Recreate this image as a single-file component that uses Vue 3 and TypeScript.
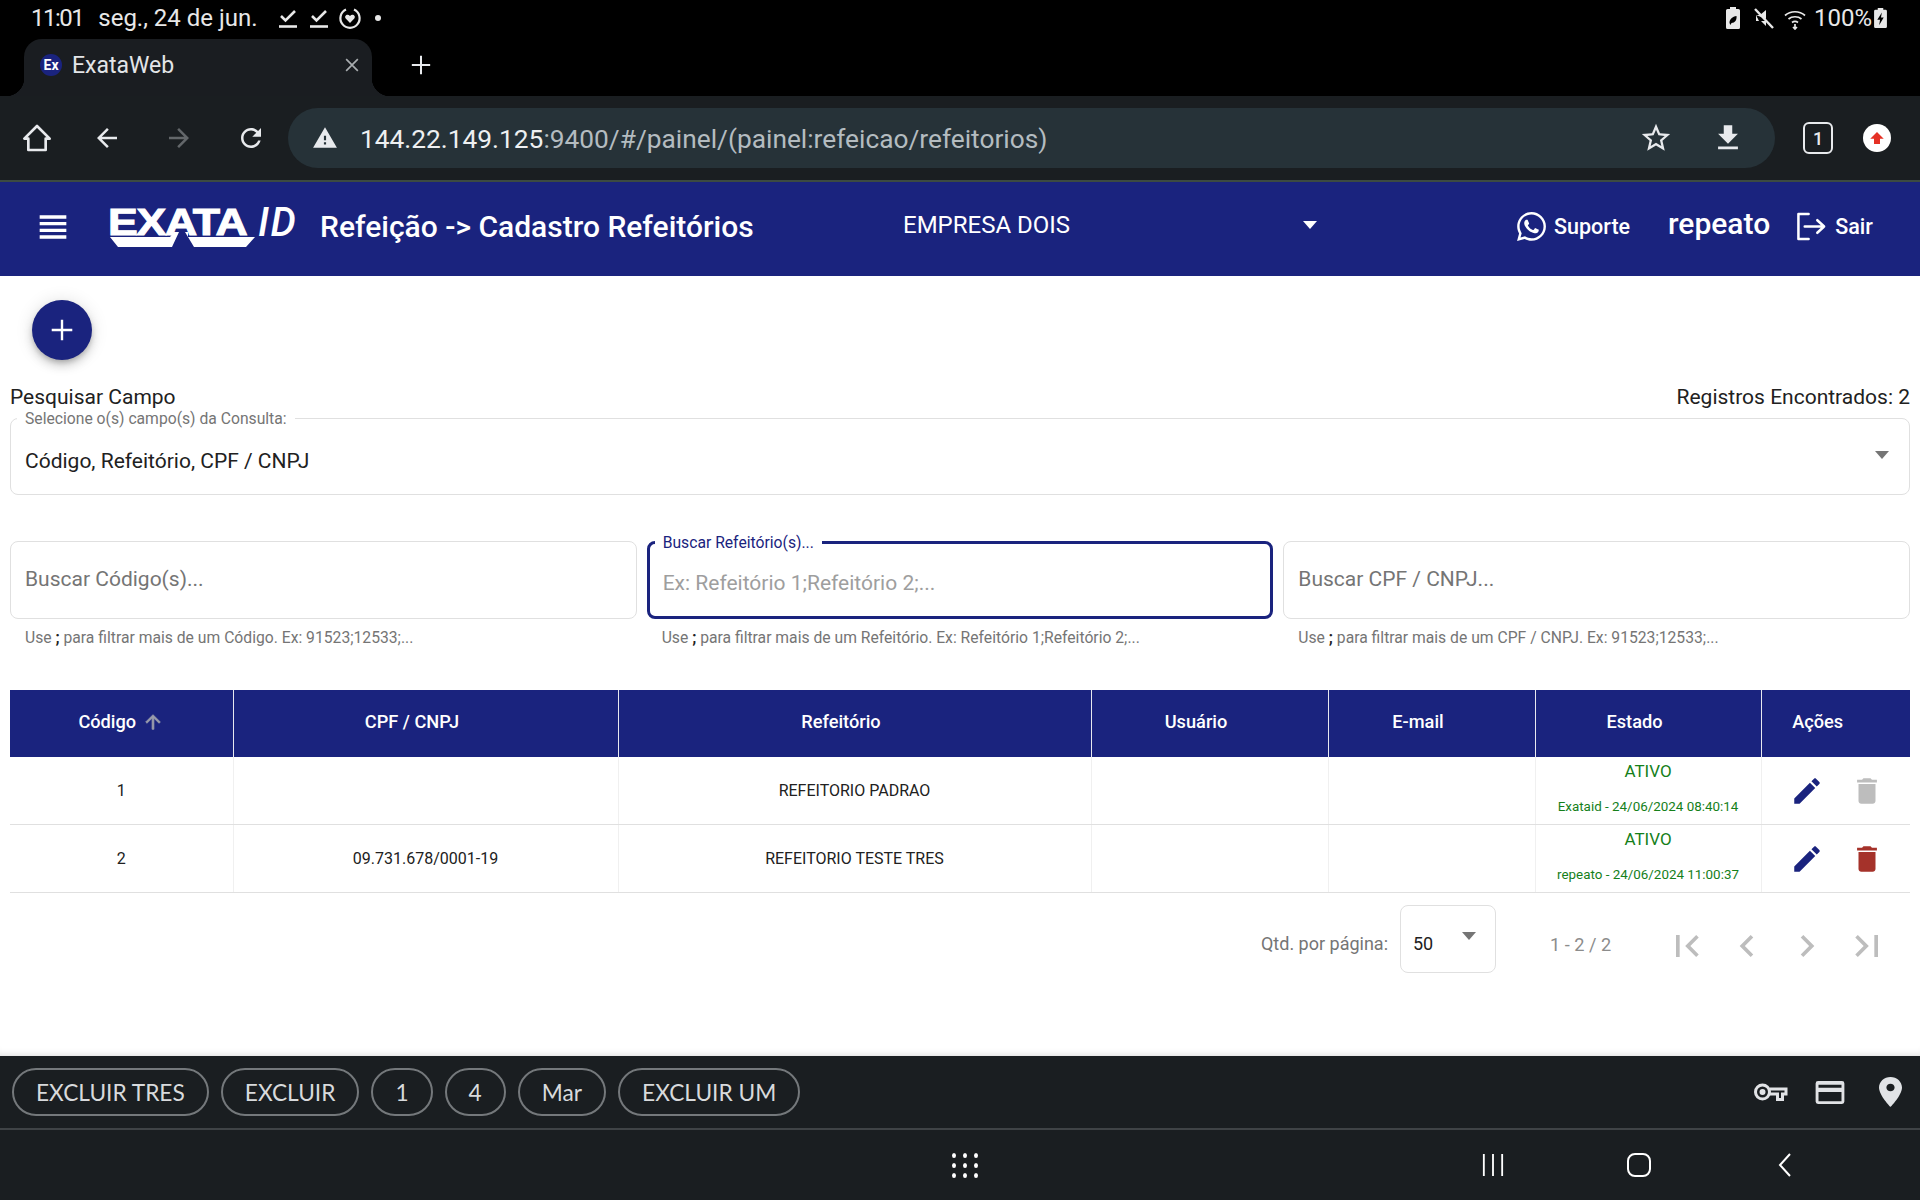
<script setup lang="ts">
interface IRow {
  id: number,
  doc: string,
  name: string,
  audit: string,
  canDelete: boolean
}

interface IFilter {
  label: string,
  placeholder: string,
  hint: string,
  focused: boolean
}

const columns = ['CPF / CNPJ', 'Refeitório', 'Usuário', 'E-mail', 'Estado', 'Ações']

const rows: IRow[] = [
  {id: 1, doc: '', name: 'REFEITORIO PADRAO', audit: 'Exataid - 24/06/2024 08:40:14', canDelete: false},
  {id: 2, doc: '09.731.678/0001-19', name: 'REFEITORIO TESTE TRES', audit: 'repeato - 24/06/2024 11:00:37', canDelete: true}
]

const filters: IFilter[] = [
  {label: '', placeholder: 'Buscar Código(s)...', hint: 'para filtrar mais de um Código. Ex: 91523;12533;...', focused: false},
  {label: 'Buscar Refeitório(s)...', placeholder: 'Ex: Refeitório 1;Refeitório 2;...', hint: 'para filtrar mais de um Refeitório. Ex: Refeitório 1;Refeitório 2;...', focused: true},
  {label: '', placeholder: 'Buscar CPF / CNPJ...', hint: 'para filtrar mais de um CPF / CNPJ. Ex: 91523;12533;...', focused: false}
]

const chips = ['EXCLUIR TRES', 'EXCLUIR', '1', '4', 'Mar', 'EXCLUIR UM']

const pager = [
  'M18.41 16.59L13.82 12l4.59-4.59L17 6l-6 6 6 6zM6 6h2v12H6z',
  'M15.41 7.41L14 6l-6 6 6 6 1.41-1.41L10.83 12z',
  'M10 6L8.59 7.41 13.17 12l-4.58 4.59L10 18l6-6z',
  'M5.59 7.41L10.18 12l-4.59 4.59L7 18l6-6-6-6zM16 6h2v12h-2z'
]
</script>

<template>
  <div class="screen">
    <div class="status-bar">
      <div class="status-left">
        <span class="clock">11:01</span>
        <span>seg., 24 de jun.</span>
        <svg class="st-icon" viewBox="0 0 24 24" fill="none" stroke="#e8e8e8" stroke-width="2.6"><path d="M5 10l4.5 4.5L19 5"/><path d="M3 20.5h18"/></svg>
        <svg class="st-icon" viewBox="0 0 24 24" fill="none" stroke="#e8e8e8" stroke-width="2.6"><path d="M5 10l4.5 4.5L19 5"/><path d="M3 20.5h18"/></svg>
        <svg class="st-icon" viewBox="0 0 24 24" fill="none" stroke="#e8e8e8" stroke-width="2.2"><path d="M8 3.5a9.6 9.6 0 1 0 8 0"/><path fill="#e8e8e8" stroke="none" d="M12 17l-4.3-4.6c-2-2.4 1.9-5.2 4.3-2.400 2.400-2.800 6.300 0 4.300 2.400z"/></svg>
        <span class="st-dot"></span>
      </div>
      <div class="status-right">
        <svg class="st-icon" viewBox="0 0 24 24"><path fill="#e8e8e8" d="M9 1h6v2h2.500a1.500 1.500 0 0 1 1.500 1.500v17a1.500 1.500 0 0 1-1.500 1.500h-11A1.500 1.500 0 0 1 5 21.500v-17A1.500 1.500 0 0 1 6.500 3H9z"/><path fill="#000" d="M8.500 17c0-4 3-6.500 7-7 .5 4-1.500 7-5 7l-1 2z"/></svg>
        <svg class="st-icon" viewBox="0 0 24 24"><path fill="#e8e8e8" d="M4 9h4l6-5v9zM4 9v6h3zM9 15l5 5v-5z"/><path stroke="#e8e8e8" stroke-width="2.400" d="M3 3l18 19"/></svg>
        <svg class="st-icon" viewBox="0 0 24 24" fill="none" stroke="#e8e8e8" stroke-width="1.700"><path d="M2 9.500c5.500-5 14.500-5 20 0"/><path d="M5.500 13c3.500-3 9.500-3 13 0"/><path d="M9 16.500c1.700-1.300 4.300-1.300 6 0"/><path d="M12 18v5M10 21l2 2 2-2"/></svg>
        <span class="battery-text">100%</span>
        <svg class="st-batt" viewBox="0 0 14 24"><path fill="#e8e8e8" d="M4 1h6v2h2.500A1.500 1.500 0 0 1 14 4.500v17a1.500 1.500 0 0 1-1.500 1.500h-11A1.500 1.500 0 0 1 0 21.500v-17A1.500 1.500 0 0 1 1.500 3H4z"/><path fill="#000" d="M8.500 6L3.500 14h3l-1 6 5-8.500h-3z"/></svg>
      </div>
    </div>

    <div class="tab-strip">
      <div class="tab">
        <span class="favicon">Ex</span>
        <span class="tab-title">ExataWeb</span>
        <svg class="tab-close" viewBox="0 0 24 24" fill="none" stroke="#a9adb0" stroke-width="2"><path d="M5 5l14 14M19 5L5 19"/></svg>
      </div>
      <svg class="tab-new" viewBox="0 0 24 24" fill="none" stroke="#e8eaed" stroke-width="2.200"><path d="M12 2v20M2 12h20"/></svg>
    </div>

    <div class="toolbar">
      <svg class="tb-icon home" viewBox="0 0 24 24" fill="none" stroke="#e8eaed" stroke-width="2" stroke-linejoin="round"><path d="M12 3L2.500 12.500H5.500V21h13v-8.500h3z"/></svg>
      <svg class="tb-icon back" viewBox="0 0 24 24"><path fill="#e8eaed" d="M20 11H7.830l5.590-5.590L12 4l-8 8 8 8 1.410-1.410L7.830 13H20v-2z"/></svg>
      <svg class="tb-icon forward" viewBox="0 0 24 24"><path fill="#63676a" d="M12 4l-1.410 1.410L16.170 11H4v2h12.170l-5.580 5.590L12 20l8-8z"/></svg>
      <svg class="tb-icon reload" viewBox="0 0 24 24"><path fill="#e8eaed" d="M17.650 6.350C16.200 4.900 14.210 4 12 4c-4.420 0-7.990 3.580-7.990 8s3.570 8 7.990 8c3.730 0 6.840-2.550 7.730-6h-2.080c-.82 2.330-3.040 4-5.650 4-3.310 0-6-2.690-6-6s2.690-6 6-6c1.660 0 3.140.69 4.220 1.780L13 11h7V4l-2.350 2.350z"/></svg>
      <div class="address">
        <svg class="warn" viewBox="0 0 24 24"><path fill="#e8eaed" d="M1 21h22L12 2 1 21zm12-3h-2v-2h2v2zm0-4h-2v-4h2v4z"/></svg>
        <span class="url"><b>144.22.149.125</b>:9400/#/painel/(painel:refeicao/refeitorios)</span>
        <svg class="star" viewBox="0 0 24 24"><path fill="#e8eaed" d="M22 9.240l-7.190-.62L12 2 9.190 8.630 2 9.240l5.460 4.730L5.820 21 12 17.270 18.180 21l-1.630-7.030L22 9.240zM12 15.400l-3.760 2.270 1-4.280-3.320-2.880 4.380-.38L12 6.100l1.710 4.040 4.380.38-3.320 2.880 1 4.280L12 15.400z"/></svg>
        <svg class="download" viewBox="0 0 24 24"><path fill="#e8eaed" d="M19 9h-4V3H9v6H5l7 7 7-7zM5 18v2h14v-2H5z"/></svg>
      </div>
      <span class="tab-count">1</span>
      <span class="update"><svg viewBox="0 0 24 24"><path fill="#e53125" d="M12 4L3 13h5v7h8v-7h5z"/></svg></span>
    </div>

    <header class="app-header">
      <svg class="menu" viewBox="0 0 24 24"><path fill="#fff" d="M4 15h16v-2H4v2zm0 4h16v-2H4v2zm0-8h16V9H4v2zm0-6v2h16V5H4z"/></svg>
      <div class="logo">
        <div class="logo-mark">
          <span class="logo-exata">EXATA</span>
          <svg class="logo-swoosh" viewBox="0 0 145 10"><path fill="#fff" d="M0 0h60l4-5h5l-7 15H8zM78 0h67l-9 10H84l-9-15h3z"/></svg>
        </div>
        <span class="logo-id">ID</span>
      </div>
      <span class="page-title">Refeição -&gt; Cadastro Refeitórios</span>
      <div class="company">
        <span>EMPRESA DOIS</span>
        <i class="caret caret-white"></i>
      </div>
      <div class="support">
        <svg viewBox="0 0 448 512"><path fill="#fff" d="M380.900 97.100C339 55.100 283.200 32 223.900 32c-122.400 0-222 99.600-222 222 0 39.100 10.200 77.300 29.600 111L0 480l117.700-30.900c32.400 17.700 68.900 27 106.100 27h.1c122.300 0 224.100-99.600 224.100-222 0-59.300-25.200-115-67.100-157zm-157 341.600c-33.200 0-65.700-8.900-94-25.700l-6.700-4-69.800 18.300L72 359.200l-4.400-7c-18.500-29.400-28.200-63.300-28.200-98.200 0-101.700 82.800-184.500 184.600-184.500 49.300 0 95.600 19.200 130.400 54.100 34.800 34.900 56.200 81.200 56.100 130.500 0 101.800-84.900 184.600-186.600 184.600zm101.200-138.200c-5.500-2.800-32.800-16.200-37.900-18-5.100-1.900-8.800-2.800-12.500 2.800-3.700 5.600-14.300 18-17.600 21.800-3.200 3.700-6.500 4.200-12 1.400-32.600-16.300-54-29.100-75.500-66-5.700-9.800 5.700-9.100 16.300-30.300 1.800-3.700.9-6.900-.5-9.700-1.400-2.800-12.500-30.100-17.100-41.200-4.500-10.800-9.100-9.300-12.500-9.500-3.200-.2-6.900-.2-10.600-.2-3.700 0-9.700 1.400-14.800 6.900-5.100 5.600-19.400 19-19.400 46.300 0 27.300 19.900 53.700 22.600 57.400 2.800 3.700 39.100 59.700 94.800 83.800 35.200 15.200 49 16.500 66.600 13.900 10.700-1.600 32.800-13.400 37.400-26.400 4.600-13 4.600-24.100 3.200-26.400-1.300-2.500-5-3.900-10.500-6.600z"/></svg>
        <span>Suporte</span>
      </div>
      <span class="user">repeato</span>
      <div class="logout">
        <svg viewBox="0 0 32 32" fill="none" stroke="#fff" stroke-width="2.600" stroke-linejoin="round" stroke-linecap="round"><path d="M13 3H2.500v26H13"/><path d="M9 16h20M22 9.500l7 6.500-7 6.500"/></svg>
        <span>Sair</span>
      </div>
    </header>

    <main class="content">
      <button class="fab">
        <svg viewBox="0 0 24 24" fill="none" stroke="#fff" stroke-width="2.200"><path d="M12 2.500v19M2.500 12h19"/></svg>
      </button>

      <div class="search-head">
        <span>Pesquisar Campo</span>
        <span>Registros Encontrados: 2</span>
      </div>

      <div class="field field-select">
        <span class="field-label">Selecione o(s) campo(s) da Consulta:</span>
        <span class="field-value">Código, Refeitório, CPF / CNPJ</span>
        <i class="caret caret-grey"></i>
      </div>

      <div class="filters">
        <div v-for="item in filters" :key="item.placeholder" class="filter">
          <div class="field" :class="{ 'field-focused': item.focused }">
            <span v-if="item.label" class="field-label">{{ item.label }}</span>
            <span class="field-placeholder">{{ item.placeholder }}</span>
          </div>
          <p class="hint">Use <b>;</b> {{ item.hint }}</p>
        </div>
      </div>

      <table class="grid">
        <colgroup>
          <col class="c-code">
          <col class="c-doc">
          <col class="c-name">
          <col class="c-user">
          <col class="c-mail">
          <col class="c-state">
          <col>
        </colgroup>
        <thead>
          <tr>
            <th>
              <span class="th-sorted">
                Código
                <svg viewBox="0 0 24 24"><path fill="#9a9cab" d="M4 12l1.410 1.410L11 7.830V20h2V7.830l5.580 5.590L20 12l-8-8z" stroke="#9a9cab" stroke-width="0.800"/></svg>
              </span>
            </th>
            <th v-for="col in columns" :key="col"><span class="th-label">{{ col }}</span></th>
          </tr>
        </thead>
        <tbody>
          <tr v-for="row in rows" :key="row.id">
            <td>{{ row.id }}</td>
            <td>{{ row.doc }}</td>
            <td>{{ row.name }}</td>
            <td></td>
            <td></td>
            <td class="state">
              <div class="state-name">ATIVO</div>
              <div class="state-audit">{{ row.audit }}</div>
            </td>
            <td>
              <div class="actions">
                <svg viewBox="0 0 24 24"><path fill="#1a237e" d="M3 17.250V21h3.750L17.810 9.940l-3.750-3.750L3 17.250zM20.710 7.040c.39-.39.39-1.020 0-1.410l-2.340-2.340c-.39-.39-1.020-.39-1.410 0l-1.830 1.830 3.750 3.750 1.830-1.830z"/></svg>
                <svg viewBox="0 0 24 24"><path :fill="row.canDelete ? '#a5322a' : '#bdbdbd'" d="M6 19c0 1.100.9 2 2 2h8c1.100 0 2-.9 2-2V7H6v12zM19 4h-3.500l-1-1h-5l-1 1H5v2h14V4z"/></svg>
              </div>
            </td>
          </tr>
        </tbody>
      </table>

      <div class="paginator">
        <span class="page-label">Qtd. por página:</span>
        <div class="page-size">
          <span>50</span>
          <i class="caret caret-grey"></i>
        </div>
        <span class="page-range">1 - 2 / 2</span>
        <div class="page-buttons">
          <svg v-for="d in pager" :key="d" viewBox="0 0 24 24"><path fill="#bdbdbd" :d="d"/></svg>
        </div>
      </div>
    </main>

    <div class="suggest">
      <div class="chips">
        <span v-for="chip in chips" :key="chip" class="chip">{{ chip }}</span>
      </div>
      <div class="suggest-tools">
        <svg class="key" viewBox="0 0 34 18" fill="none" stroke="#e1e3e6" stroke-width="3"><circle cx="9" cy="9" r="7"/><path d="M16 6H32.500V11H29V16.500H24V11H16"/><circle cx="9" cy="9" r="1.500"/></svg>
        <svg class="card" viewBox="0 0 30 24"><path fill="#e1e3e6" fill-rule="evenodd" d="M2.500 0h25A2.500 2.500 0 0 1 30 2.500v19a2.500 2.500 0 0 1-2.500 2.500h-25A2.500 2.500 0 0 1 0 21.500v-19A2.500 2.500 0 0 1 2.500 0zM3 4v3h24V4zM3 11.500V21h24v-9.500z"/></svg>
        <svg class="pin" viewBox="5 2 14 20" preserveAspectRatio="none"><path fill="#e1e3e6" d="M12 2C8.130 2 5 5.130 5 9c0 5.250 7 13 7 13s7-7.750 7-13c0-3.870-3.130-7-7-7zm0 9.500c-1.380 0-2.500-1.120-2.500-2.500s1.120-2.500 2.500-2.500 2.500 1.120 2.500 2.500-1.120 2.500-2.500 2.500z"/></svg>
      </div>
    </div>

    <nav class="nav-bar">
      <div class="nav-apps"><i v-for="n in 9" :key="n"></i></div>
      <svg class="nav-recent" viewBox="0 0 24 24" stroke="#fff" stroke-width="2"><path d="M2 0v24M12 0v24M22 0v24"/></svg>
      <svg class="nav-home" viewBox="0 0 24 24" fill="none" stroke="#fff" stroke-width="2"><rect x="1" y="1" width="22" height="22" rx="7"/></svg>
      <svg class="nav-back" viewBox="0 0 14 24" fill="none" stroke="#fff" stroke-width="2"><path d="M12 1L2 12l10 11"/></svg>
    </nav>
  </div>
</template>

<style scoped>
.screen {
  width: 1920px;
  height: 1200px;
  display: flex;
  flex-direction: column;
  overflow: hidden;
  font-family: Roboto, "Noto Sans", sans-serif;
  background: #fff;
}
.status-bar {
  height: 39px;
  flex: none;
  box-sizing: border-box;
  background: #000;
  color: #e8e8e8;
  display: flex;
  align-items: center;
  justify-content: space-between;
  padding: 0 33px 3px 31px;
  font-size: 24px;
}
.status-left, .status-right {
  display: flex;
  align-items: center;
}
.clock {
  margin-right: 15px;
  letter-spacing: -1.5px;
}
.st-icon {
  width: 24px;
  height: 24px;
  margin-left: 7px;
}
.status-left span + .st-icon {
  margin-left: 18px;
}
.st-dot {
  width: 6px;
  height: 6px;
  margin-left: 13px;
  border-radius: 50%;
  background: #e8e8e8;
}
.battery-text {
  margin-left: 7px;
}
.st-batt {
  width: 13px;
  height: 22px;
  margin-left: 2px;
}
.tab-strip {
  height: 57px;
  flex: none;
  background: #000;
  display: flex;
  align-items: center;
  padding-left: 24px;
}
.tab {
  position: relative;
  width: 348px;
  height: 57px;
  background: #1a1d21;
  border-radius: 18px 18px 0 0;
  display: flex;
  align-items: center;
  padding: 0 10px 5px 16px;
  box-sizing: border-box;
  color: #e3e5e8;
  font-size: 23px;
}
.tab::before, .tab::after {
  content: "";
  position: absolute;
  bottom: 0;
  width: 18px;
  height: 18px;
}
.tab::before {
  left: -18px;
  background: radial-gradient(circle at 0 0, #000 18px, #1a1d21 18.5px);
}
.tab::after {
  right: -18px;
  background: radial-gradient(circle at 100% 0, #000 18px, #1a1d21 18.5px);
}
.favicon {
  width: 22px;
  height: 22px;
  border-radius: 50%;
  background: #1a237e;
  color: #fff;
  font-size: 14px;
  font-weight: 700;
  display: flex;
  align-items: center;
  justify-content: center;
  margin-right: 10px;
}
.tab-title {
  flex: 1;
}
.tab-close {
  width: 20px;
  height: 20px;
}
.tab-new {
  width: 22px;
  height: 22px;
  margin: -5px 0 0 38px;
}
.toolbar {
  height: 84px;
  flex: none;
  background: #1a1e21;
  border-bottom: 2px solid #3c4a42;
  display: flex;
  align-items: center;
}
.tb-icon {
  width: 30px;
  height: 30px;
  flex: none;
}
.home {
  margin-left: 21px;
  width: 32px;
  height: 34px;
}
.back {
  margin-left: 39px;
}
.forward {
  margin-left: 42px;
}
.reload {
  margin-left: 42px;
}
.address {
  width: 1487px;
  height: 60px;
  margin-left: 22px;
  background: #263238;
  border-radius: 30px;
  display: flex;
  align-items: center;
  padding: 0 30px 0 24px;
  box-sizing: border-box;
}
.warn {
  width: 26px;
  height: 26px;
  margin-right: 22px;
}
.url {
  flex: 1;
  padding-top: 2px;
  font-size: 26.300px;
  color: #b4bcc0;
}
.url b {
  font-weight: 400;
  color: #eef0f1;
}
.star {
  width: 34px;
  height: 34px;
}
.download {
  width: 34px;
  height: 34px;
  margin-left: 38px;
}
.tab-count {
  width: 26px;
  height: 28px;
  margin-left: 28px;
  border: 2.5px solid #e8eaed;
  border-radius: 6px;
  color: #e8eaed;
  font-size: 18px;
  font-weight: 500;
  display: flex;
  align-items: center;
  justify-content: center;
}
.update {
  width: 28px;
  height: 28px;
  margin-left: 30px;
  border-radius: 50%;
  background: #fff;
  display: flex;
  align-items: center;
  justify-content: center;
}
.update svg {
  width: 18px;
  height: 18px;
}
.app-header {
  height: 94px;
  flex: none;
  box-sizing: border-box;
  background: #1a237e;
  color: #fff;
  display: flex;
  align-items: center;
  padding: 0 0 5px 33px;
}
.menu {
  width: 40px;
  height: 40px;
  flex: none;
}
.logo {
  display: flex;
  align-items: flex-start;
  width: 190px;
  margin-left: 35px;
  margin-top: 2px;
}
.logo-mark {
  width: 150px;
  flex: none;
}
.logo-exata {
  display: block;
  font-family: "Liberation Sans", sans-serif;
  font-weight: 700;
  font-size: 36px;
  line-height: 28px;
  letter-spacing: -1px;
  transform: scaleX(1.24);
  transform-origin: 0 50%;
  -webkit-text-stroke: 1px #fff;
}
.logo-swoosh {
  display: block;
  width: 145px;
  height: 10px;
  margin: 0 0 0 2px;
  overflow: visible;
}
.logo-id {
  font-size: 40px;
  font-style: italic;
  font-weight: 500;
  line-height: 28px;
  letter-spacing: 1.500px;
}
.page-title {
  width: 583px;
  margin-left: 22px;
  font-size: 30px;
  font-weight: 500;
  white-space: nowrap;
}
.company {
  width: 420px;
  display: flex;
  align-items: center;
  justify-content: space-between;
  font-size: 24px;
  padding-bottom: 4px;
  padding-right: 6px;
  box-sizing: border-box;
}
.caret {
  display: block;
  width: 0;
  height: 0;
  border-left: 7px solid transparent;
  border-right: 7px solid transparent;
}
.caret-white {
  border-top: 8px solid #fff;
}
.caret-grey {
  border-top: 8px solid #757575;
}
.support {
  margin-left: 193px;
  display: flex;
  align-items: center;
  gap: 7px;
  font-size: 21.500px;
  font-weight: 500;
  width: 114px;
  flex: none;
}
.support svg {
  width: 31px;
  height: 33px;
  flex: none;
}
.user {
  margin-left: 38px;
  font-size: 30px;
  font-weight: 500;
  padding-bottom: 6px;
}
.logout {
  margin-left: 26px;
  display: flex;
  align-items: center;
  gap: 8px;
  font-size: 21.500px;
  font-weight: 500;
}
.logout svg {
  width: 31px;
  height: 31px;
}
.content {
  flex: 1;
  padding: 24px 10px 0;
  min-height: 0;
  box-shadow: inset 0 -8px 8px -8px rgba(0, 0, 0, 0.18);
}
.fab {
  display: flex;
  align-items: center;
  justify-content: center;
  width: 60px;
  height: 60px;
  margin-left: 22px;
  border: none;
  padding: 0;
  border-radius: 50%;
  background: #1a237e;
  box-shadow: 0 3px 5px -1px rgba(0, 0, 0, .2), 0 6px 10px 0 rgba(0, 0, 0, .14), 0 1px 18px 0 rgba(0, 0, 0, .12);
}
.fab svg {
  width: 26px;
  height: 26px;
}
.search-head {
  display: flex;
  justify-content: space-between;
  margin-top: 24px;
  height: 26px;
  line-height: 26px;
  font-size: 21px;
  color: #212121;
}
.field {
  position: relative;
  height: 78px;
  box-sizing: border-box;
  border: 1.500px solid #e0e0e0;
  border-radius: 8px;
  display: flex;
  align-items: center;
  padding: 0 14px;
}
.field-select {
  height: 77px;
  margin-top: 8px;
  justify-content: space-between;
}
.field-select .caret {
  margin-right: 6px;
  margin-top: -4px;
}
.field-label {
  position: absolute;
  top: -9px;
  left: 6px;
  padding: 0 8px;
  background: #fff;
  font-size: 15.700px;
  line-height: 18px;
  color: #757575;
}
.field-value {
  font-size: 21px;
  color: #212121;
  padding-top: 8px;
}
.field-placeholder {
  font-size: 21px;
  color: #757575;
  padding-bottom: 2px;
}
.field-focused {
  border: 3px solid #1a237e;
  padding: 0 13px;
}
.field-focused .field-label {
  color: #1a237e;
  left: 5px;
  top: -10px;
}
.field-focused .field-placeholder {
  color: #9e9e9e;
  padding-bottom: 0;
  padding-top: 6px;
}
.filters {
  margin-top: 46px;
  display: grid;
  grid-template-columns: repeat(3, 1fr);
  gap: 10px;
}
.hint {
  margin: 9px 0 0 15px;
  font-size: 15.700px;
  line-height: 19px;
  color: #757575;
  white-space: nowrap;
}
.hint b {
  color: #212121;
}
.grid {
  margin-top: 43px;
  width: 1900px;
  border-collapse: collapse;
  table-layout: fixed;
}
.c-code { width: 223px; }
.c-doc { width: 385px; }
.c-name { width: 473px; }
.c-user { width: 237px; }
.c-mail { width: 207px; }
.c-state { width: 226px; }
.grid th {
  height: 67px;
  box-sizing: border-box;
  padding: 0 0 4px;
  background: #1a237e;
  color: #fff;
  font-size: 18.200px;
  font-weight: 500;
  border-left: 1px solid #e8e8f0;
}
.grid th:first-child {
  border-left: none;
}
.th-label {
  display: inline-block;
  padding-right: 27px;
}
.grid th:last-child .th-label {
  padding-right: 36px;
}
.th-sorted {
  display: inline-flex;
  align-items: center;
  gap: 6px;
}
.th-sorted svg {
  width: 22px;
  height: 22px;
}
.grid td {
  height: 67px;
  padding: 0;
  text-align: center;
  font-size: 16px;
  color: #212121;
  border-left: 1px solid #f0f0f0;
  border-bottom: 1.500px solid #e0e0e0;
}
.grid td:first-child {
  border-left: none;
}
.state-name {
  font-size: 17px;
  line-height: 20px;
  color: #15801a;
  margin-top: -6px;
}
.state-audit {
  font-size: 13.400px;
  line-height: 16px;
  color: #15801a;
  margin-top: 18px;
}
.actions {
  display: flex;
  justify-content: center;
  gap: 26px;
  padding-left: 2px;
}
.actions svg {
  width: 34px;
  height: 34px;
}
.paginator {
  margin-top: 12px;
  display: flex;
  align-items: center;
  font-size: 18px;
  color: #757575;
}
.page-label {
  margin-left: auto;
  padding-top: 8px;
}
.page-size {
  width: 96px;
  height: 68px;
  margin-left: 12px;
  box-sizing: border-box;
  border: 1.500px solid #e0e0e0;
  border-radius: 8px;
  display: flex;
  align-items: center;
  justify-content: space-between;
  padding: 0 19px 0 12px;
  color: #212121;
}
.page-size span {
  padding-top: 8px;
}
.page-size .caret {
  margin-top: -6px;
}
.page-range {
  width: 115px;
  margin-left: 54px;
  font-size: 18.200px;
  color: #8c8c8c;
  padding-top: 11px;
}
.page-buttons {
  display: flex;
  gap: 16px;
  margin-right: 21px;
  padding-top: 13px;
}
.page-buttons svg {
  width: 44px;
  height: 44px;
}
.suggest {
  height: 72px;
  flex: none;
  background: #1a1e21;
  border-bottom: 2px solid #3f4346;
  display: flex;
  align-items: center;
  justify-content: space-between;
  padding: 0 18px 0 12px;
}
.chips {
  display: flex;
  gap: 12px;
}
.chip {
  height: 48px;
  box-sizing: border-box;
  border: 2px solid #74787b;
  border-radius: 24px;
  padding: 0 22px;
  display: flex;
  align-items: center;
  color: #d8dadc;
  font-family: Lato, sans-serif;
  font-size: 22.700px;
}
.suggest-tools {
  display: flex;
  align-items: center;
}
.key {
  width: 35px;
  height: 18px;
}
.card {
  width: 30px;
  height: 23px;
  margin-left: 27px;
}
.pin {
  width: 23px;
  height: 30px;
  margin-left: 34px;
}
.nav-bar {
  height: 70px;
  flex: none;
  background: #1a1e21;
  display: flex;
  align-items: center;
}
.nav-apps {
  width: 26px;
  display: grid;
  grid-template-columns: repeat(3, 4px);
  grid-auto-rows: 5px;
  justify-content: space-between;
  row-gap: 5px;
  margin-left: 952px;
}
.nav-apps i {
  background: #fff;
  border-radius: 50%;
}
.nav-recent {
  width: 22px;
  height: 24px;
  margin-left: 504px;
}
.nav-home {
  width: 24px;
  height: 24px;
  margin-left: 123px;
}
.nav-back {
  width: 14px;
  height: 24px;
  margin-left: 127px;
}
</style>

<style>
body {
  margin: 0;
  background: #fff;
}
</style>
